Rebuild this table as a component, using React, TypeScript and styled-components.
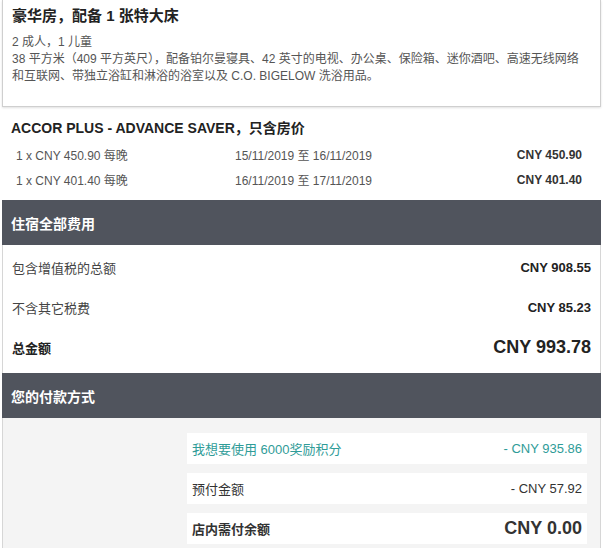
import React from "react"
import styled, { createGlobalStyle } from "styled-components"

const GlobalStyle = createGlobalStyle`
    html, body {
        margin: 0;
        padding: 0;
        background: #ffffff;
    }
    body {
        font-family: "Liberation Sans", Arial, "Noto Sans CJK SC", sans-serif;
        color: #333333;
    }
`

const Page = styled.div({
    width: "599px",
    marginLeft: "2px",
    display: "flex",
    flexDirection: "column"
})

const RoomCard = styled.div({
    border: "1px solid #cfcfcf",
    borderTop: "none",
    boxShadow: "0 1px 2px rgba(0, 0, 0, 0.12)",
    padding: "6px 18px 21px 9px",
    display: "flex",
    flexDirection: "column"
})

const RoomTitle = styled.div({
    fontSize: "15px",
    fontWeight: "bold",
    lineHeight: "20px",
    color: "#222222",
    marginBottom: "8px"
})

const RoomText = styled.div({
    fontSize: "12px",
    lineHeight: "17px",
    color: "#555555"
})

const RateSection = styled.div({
    padding: "12px 9px 8px 9px",
    display: "flex",
    flexDirection: "column"
})

const RateTitle = styled.div({
    fontSize: "14px",
    fontWeight: "bold",
    lineHeight: "18px",
    color: "#222222",
    marginBottom: "5px"
})

const RateRow = styled.div({
    display: "grid",
    gridTemplateColumns: "219px 1fr auto",
    padding: "0 10px 0 5px",
    height: "25px",
    alignItems: "center",
    fontSize: "12px",
    color: "#555555"
})

const RateAmount = styled.span({
    fontWeight: "bold",
    color: "#333333"
})

const SectionHeader = styled.div({
    height: "45px",
    background: "#50545d",
    color: "#ffffff",
    fontSize: "14px",
    fontWeight: "bold",
    display: "flex",
    alignItems: "center",
    padding: "0 9px"
})

const TotalsBox = styled.div({
    borderLeft: "1px solid #d6d6d6",
    borderRight: "1px solid #d6d6d6",
    padding: "2px 9px 6px 9px",
    display: "flex",
    flexDirection: "column"
})

const TotalRow = styled.div<{ grand?: boolean }>(({ grand }) => ({
    height: "40px",
    display: "flex",
    justifyContent: "space-between",
    alignItems: "center",
    fontSize: "13px",
    fontWeight: grand ? "bold" : "normal",
    color: grand ? "#222222" : "#444444"
}))

const TotalValue = styled.span<{ grand?: boolean }>(({ grand }) => ({
    fontWeight: "bold",
    fontSize: grand ? "18px" : "13px",
    color: "#222222"
}))

const PaymentBox = styled.div({
    background: "#f4f4f4",
    borderLeft: "1px solid #d6d6d6",
    borderRight: "1px solid #d6d6d6",
    padding: "15px 13px 4px 184px",
    display: "flex",
    flexDirection: "column",
    gap: "9px"
})

const PayRow = styled.div<{ variant?: "points" | "final" }>(({ variant }) => ({
    height: "31px",
    background: "#ffffff",
    display: "flex",
    justifyContent: "space-between",
    alignItems: "center",
    padding: "0 5px",
    fontSize: "13px",
    fontWeight: variant === "final" ? "bold" : "normal",
    color: variant === "points" ? "#2f9c98" : "#333333"
}))

const PayValue = styled.span<{ variant?: "points" | "final" }>(({ variant }) => ({
    fontSize: variant === "final" ? "18px" : "13px",
    fontWeight: variant === "final" ? "bold" : "normal",
    color: variant === "points" ? "#2f9c98" : "#333333"
}))

const nights = [
    { rate: "1 x CNY 450.90 每晚", dates: "15/11/2019 至 16/11/2019", amount: "CNY 450.90" },
    { rate: "1 x CNY 401.40 每晚", dates: "16/11/2019 至 17/11/2019", amount: "CNY 401.40" }
]

const App: React.FC = () => {
    return (
        <Page>
            <GlobalStyle />
            <RoomCard>
                <RoomTitle>豪华房，配备 1 张特大床</RoomTitle>
                <RoomText>2 成人，1 儿童</RoomText>
                <RoomText>
                    38 平方米（409 平方英尺），配备铂尔曼寝具、42 英寸的电视、办公桌、保险箱、迷你酒吧、高速无线网络和互联网、带独立浴缸和淋浴的浴室以及 C.O. BIGELOW 洗浴用品。
                </RoomText>
            </RoomCard>
            <RateSection>
                <RateTitle>ACCOR PLUS - ADVANCE SAVER，只含房价</RateTitle>
                {
                    nights.map((night, index) =>
                        <RateRow key={index}>
                            <span>{night.rate}</span>
                            <span>{night.dates}</span>
                            <RateAmount>{night.amount}</RateAmount>
                        </RateRow>
                    )
                }
            </RateSection>
            <SectionHeader>住宿全部费用</SectionHeader>
            <TotalsBox>
                <TotalRow>
                    <span>包含增值税的总额</span>
                    <TotalValue>CNY 908.55</TotalValue>
                </TotalRow>
                <TotalRow>
                    <span>不含其它税费</span>
                    <TotalValue>CNY 85.23</TotalValue>
                </TotalRow>
                <TotalRow grand>
                    <span>总金额</span>
                    <TotalValue grand>CNY 993.78</TotalValue>
                </TotalRow>
            </TotalsBox>
            <SectionHeader>您的付款方式</SectionHeader>
            <PaymentBox>
                <PayRow variant="points">
                    <span>我想要使用 6000奖励积分</span>
                    <PayValue variant="points">- CNY 935.86</PayValue>
                </PayRow>
                <PayRow>
                    <span>预付金额</span>
                    <PayValue>- CNY 57.92</PayValue>
                </PayRow>
                <PayRow variant="final">
                    <span>店内需付余额</span>
                    <PayValue variant="final">CNY 0.00</PayValue>
                </PayRow>
            </PaymentBox>
        </Page>
    )
}

export default App
